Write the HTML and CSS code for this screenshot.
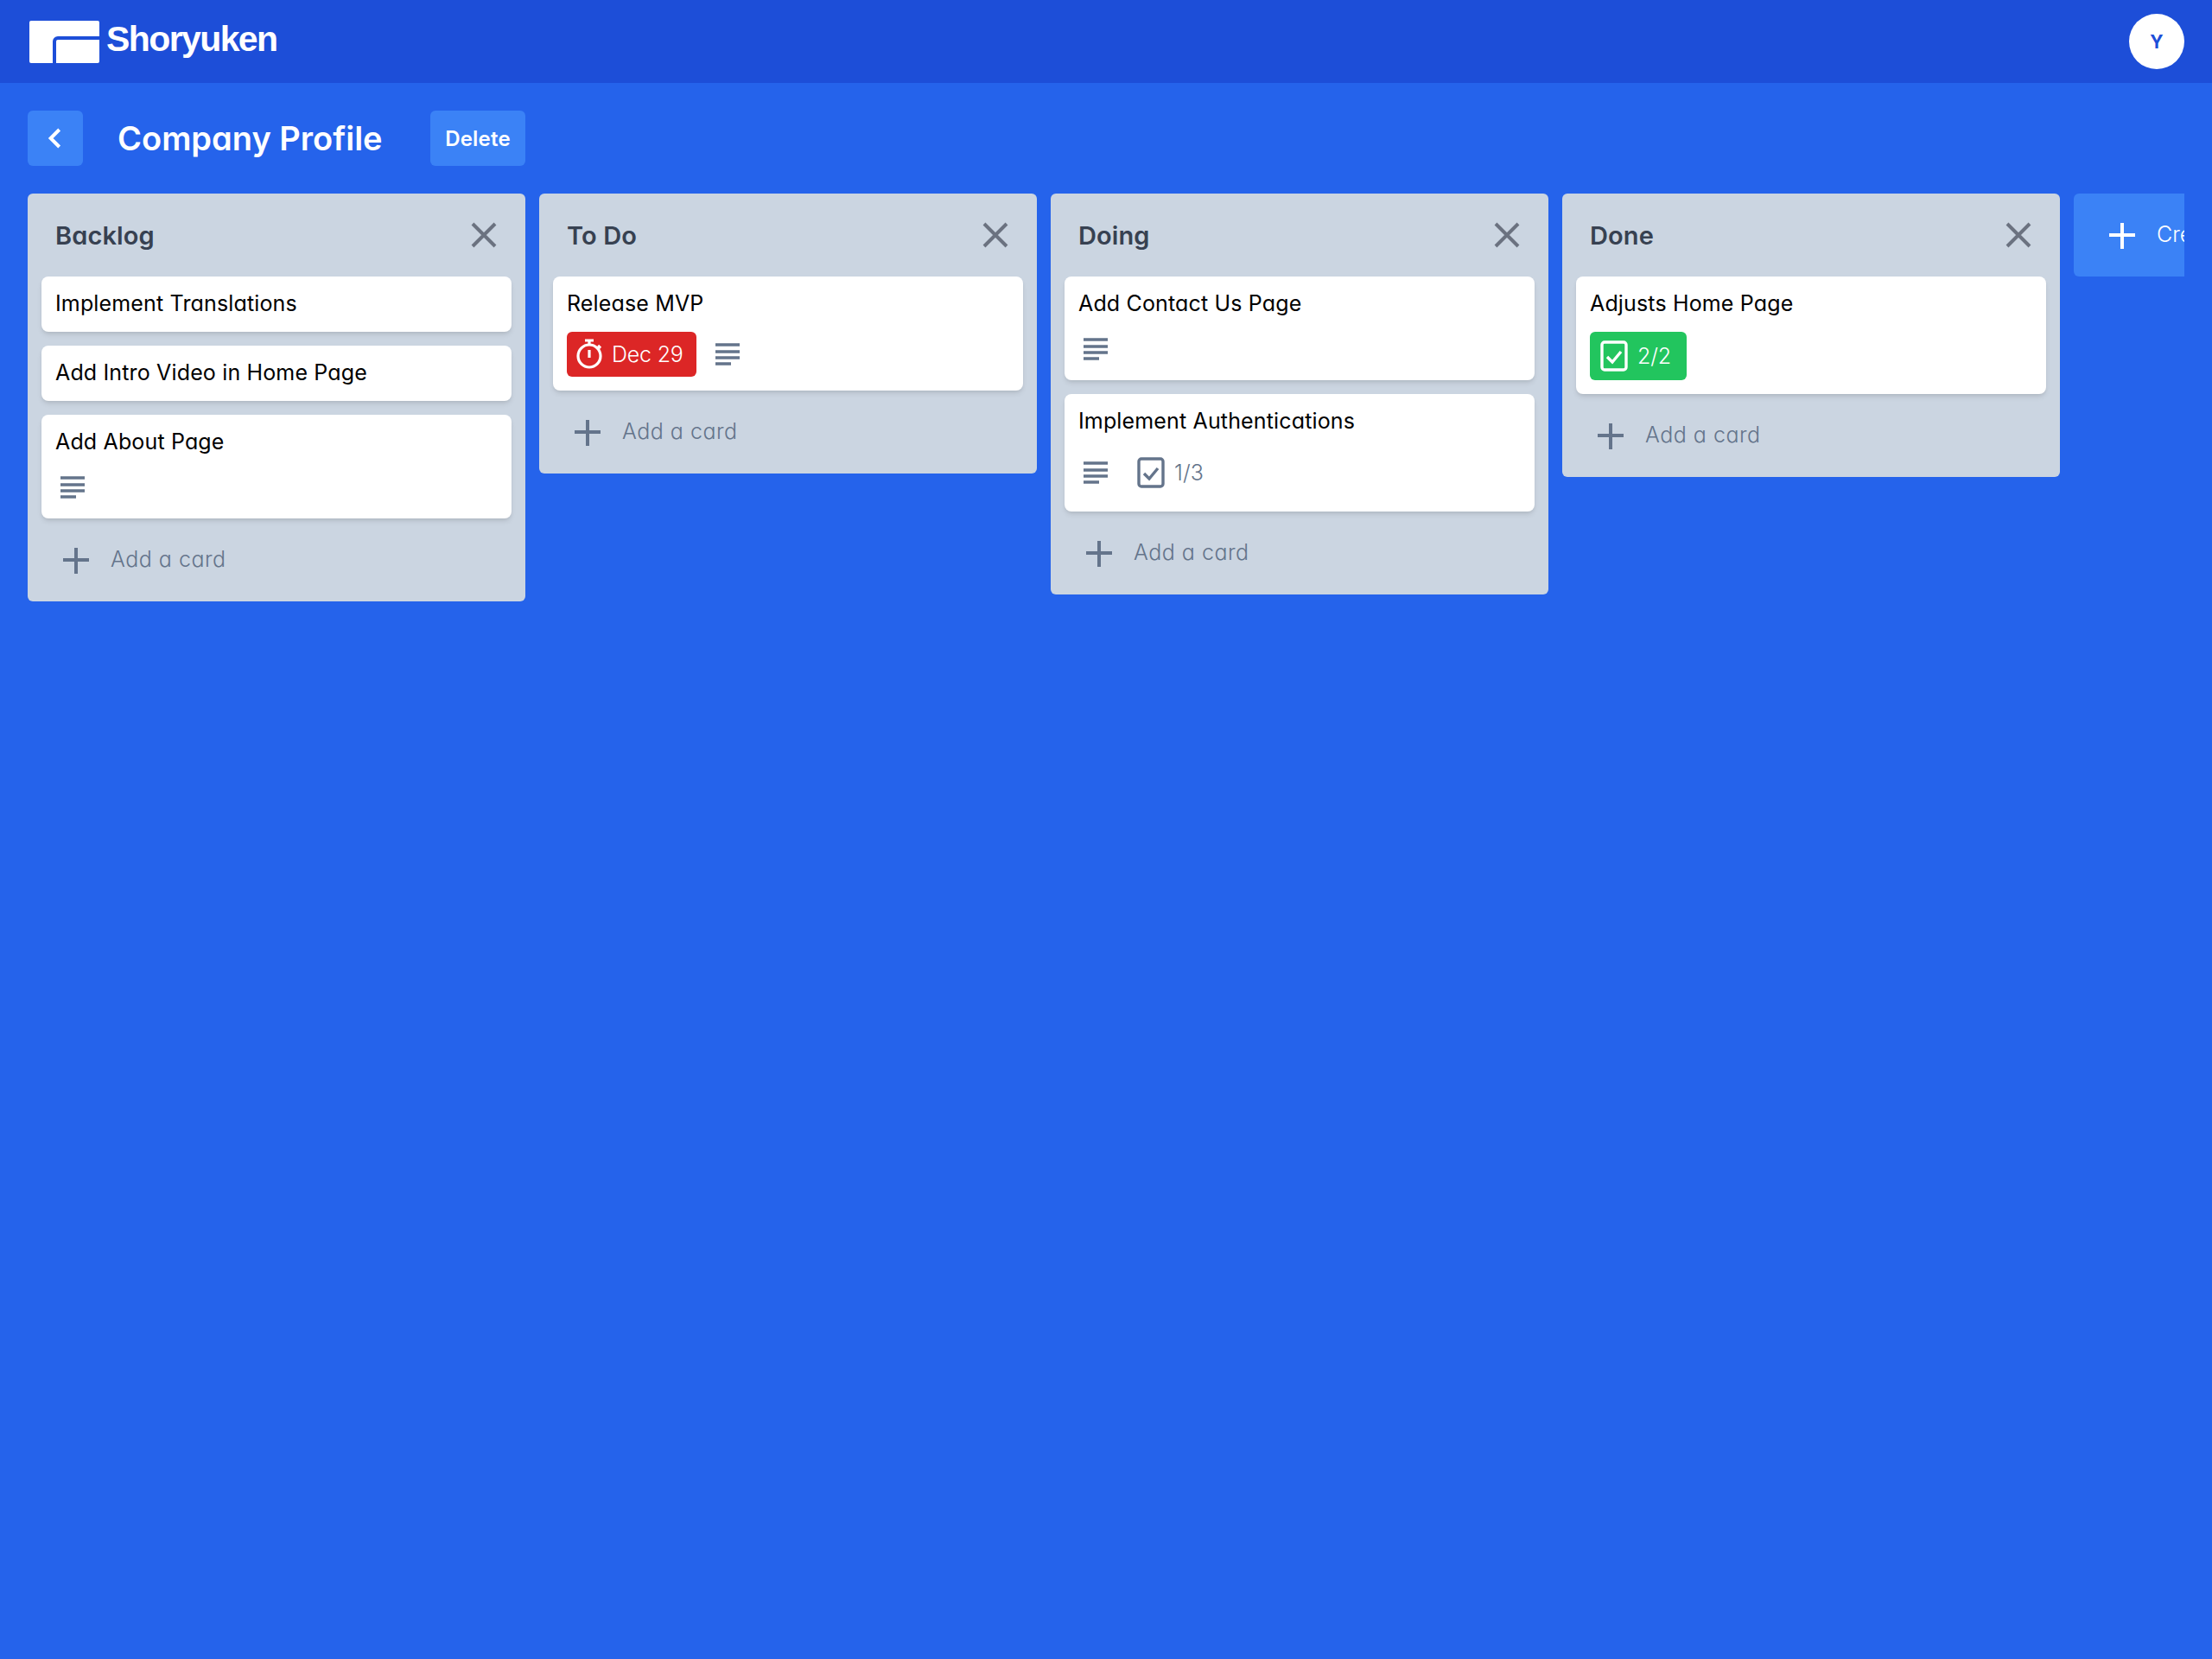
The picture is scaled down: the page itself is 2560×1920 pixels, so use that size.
FILE: index.html
```html
<!DOCTYPE html>
<html lang="en">
<head>
<meta charset="utf-8">
<title>Company Profile</title>
<link rel="stylesheet" href="styles.css">
</head>
<body>
<header class="topbar">
  <div class="brand">
    <svg class="logo" viewBox="0 0 81 49" width="81" height="49"><path fill="#fff" d="M2 0H79a2 2 0 0 1 2 2V18H33a6 6 0 0 0-6 6V49H2a2 2 0 0 1-2-2V2A2 2 0 0 1 2 0Z"/><path fill="#fff" d="M31 24a2 2 0 0 1 2-2H81V47a2 2 0 0 1-2 2H31Z"/></svg>
    <span class="brand-name">Shoryuken</span>
  </div>
  <div class="avatar">Y</div>
</header>
<main class="page">
  <div class="board-head">
    <button class="btn btn-back"><svg viewBox="0 0 24 24" width="32" height="32" fill="none" stroke="#fff" stroke-width="3"><path d="M15.5 4.5L8 12l7.5 7.5"/></svg></button>
    <h1 class="board-title">Company Profile</h1>
    <button class="btn btn-delete">Delete</button>
  </div>
  <div class="board">
    <section class="column">
      <div class="col-head"><h2>Backlog</h2><svg class="icon-x" viewBox="0 0 32 32"><path d="M3 3l26 26M29 3L3 29"/></svg></div>
      <div class="cards">
        <article class="card"><p>Implement Translations</p></article>
        <article class="card"><p>Add Intro Video in Home Page</p></article>
        <article class="card h120"><p>Add About Page</p><div class="meta"><svg class="icon-notes" viewBox="0 0 28 28"><path d="M0 3h28M0 11h28M0 18h28M0 25h18"/></svg></div></article>
      </div>
      <div class="add"><svg class="icon-plus" viewBox="0 0 32 32"><path d="M16 2v30M1 16h30"/></svg><span>Add a card</span></div>
    </section>
    <section class="column">
      <div class="col-head"><h2>To Do</h2><svg class="icon-x" viewBox="0 0 32 32"><path d="M3 3l26 26M29 3L3 29"/></svg></div>
      <div class="cards">
        <article class="card h132"><p>Release MVP</p><div class="meta meta-tight">
          <span class="badge badge-red"><svg class="icon-timer" viewBox="0 0 32 36"><path d="M11 2h10M16 7V2M16 13v9M26 8l3 3"/><circle cx="16" cy="20" r="13"/></svg>Dec 29</span>
          <svg class="icon-notes ml" viewBox="0 0 28 28"><path d="M0 3h28M0 11h28M0 18h28M0 25h18"/></svg>
        </div></article>
      </div>
      <div class="add"><svg class="icon-plus" viewBox="0 0 32 32"><path d="M16 2v30M1 16h30"/></svg><span>Add a card</span></div>
    </section>
    <section class="column">
      <div class="col-head"><h2>Doing</h2><svg class="icon-x" viewBox="0 0 32 32"><path d="M3 3l26 26M29 3L3 29"/></svg></div>
      <div class="cards">
        <article class="card h120"><p>Add Contact Us Page</p><div class="meta"><svg class="icon-notes" viewBox="0 0 28 28"><path d="M0 3h28M0 11h28M0 18h28M0 25h18"/></svg></div></article>
        <article class="card h136"><p>Implement Authentications</p><div class="meta meta-tall">
          <svg class="icon-notes" viewBox="0 0 28 28"><path d="M0 3h28M0 11h28M0 18h28M0 25h18"/></svg>
          <svg class="icon-check grey" viewBox="0 0 32 36"><rect x="2" y="2" width="28" height="32" rx="3"/><path d="M8 19l6 6 10-12"/></svg>
          <span class="count">1/3</span>
        </div></article>
      </div>
      <div class="add"><svg class="icon-plus" viewBox="0 0 32 32"><path d="M16 2v30M1 16h30"/></svg><span>Add a card</span></div>
    </section>
    <section class="column">
      <div class="col-head"><h2>Done</h2><svg class="icon-x" viewBox="0 0 32 32"><path d="M3 3l26 26M29 3L3 29"/></svg></div>
      <div class="cards">
        <article class="card h136"><p>Adjusts Home Page</p><div class="meta meta-tight">
          <span class="badge badge-green"><svg class="icon-check white" viewBox="0 0 32 36"><rect x="2" y="2" width="28" height="32" rx="3"/><path d="M8 19l6 6 10-12"/></svg>2/2</span>
        </div></article>
      </div>
      <div class="add"><svg class="icon-plus" viewBox="0 0 32 32"><path d="M16 2v30M1 16h30"/></svg><span>Add a card</span></div>
    </section>
    <button class="create"><svg class="icon-plus" viewBox="0 0 32 32"><path d="M16 2v30M1 16h30"/></svg><span>Create a list</span></button>
  </div>
</main>
</body>
</html>
```
FILE: styles.css
```css
* { box-sizing: border-box; }
html, body { margin: 0; height: 100%; }
body {
  background: #2563eb;
  font-family: Inter, "Noto Sans", sans-serif;
  font-feature-settings: "cv11";
  color: #000;
}
.topbar {
  height: 96px;
  background: #1d4ed8;
  display: flex;
  align-items: center;
  justify-content: space-between;
  padding: 0 32px 0 34px;
}
.brand { display: flex; align-items: center; gap: 8px; }
.logo { display: block; }
.brand-name {
  font-family: "Liberation Sans", Arial, sans-serif;
  font-size: 41px;
  font-weight: 700;
  letter-spacing: -1.6px;
  color: #fff;
  position: relative;
  top: -3px;
}
.avatar {
  width: 64px; height: 64px;
  border-radius: 50%;
  background: #fff;
  color: #1d4ed8;
  font-size: 21px;
  font-weight: 700;
  display: flex; align-items: center; justify-content: center;
}
.page { padding: 32px; }
.board-head { display: flex; align-items: center; height: 64px; width: 576px; }
.btn {
  height: 64px;
  border: 0;
  border-radius: 6px;
  background: #3b82f6;
  color: #fff;
  font: inherit;
  display: flex; align-items: center; justify-content: center;
  padding: 0;
}
.btn-back { width: 64px; flex: none; }
.btn-delete { width: 110px; flex: none; font-size: 24px; font-weight: 600; letter-spacing: 0.2px; }
.board-title {
  flex: 1;
  margin: 0 0 0 40px;
  font-size: 38px;
  font-weight: 600;
  color: #fff;
}
.board {
  display: flex;
  align-items: flex-start;
  gap: 16px;
  margin-top: 32px;
  overflow: hidden;
}
.column {
  flex: none;
  width: 576px;
  background: #cbd5e1;
  border-radius: 6px;
  padding: 0 16px 16px;
}
.col-head {
  height: 96px;
  display: flex; align-items: center; justify-content: space-between;
  padding: 0 16px;
}
.col-head h2 { margin: 0; font-size: 29px; font-weight: 600; color: #374151; letter-spacing: 0.1px; }
.icon-x { width: 32px; height: 32px; fill: none; stroke: #6b7280; stroke-width: 4; }
.cards { display: flex; flex-direction: column; gap: 16px; }
.card {
  min-height: 64px;
  background: #fff;
  border-radius: 8px;
  padding: 16px;
  box-shadow: 0 4px 6px -1px rgba(0,0,0,.1), 0 2px 4px -1px rgba(0,0,0,.06);
}
.h120 { height: 120px; }
.h132 { height: 132px; }
.h136 { height: 136px; }
.card p { margin: 0; font-size: 25px; line-height: 30px; letter-spacing: 0.15px; }
.meta { display: flex; align-items: center; margin-top: 22px; height: 32px; }
.meta-tall { margin-top: 29px; }
.meta-tight { margin-top: 18px; height: auto; }
.icon-notes { width: 28px; height: 28px; flex: none; margin-left: 6px; fill: none; stroke: #64748b; stroke-width: 3.4; }
.icon-notes.ml { margin-left: 22px; }
.icon-check { width: 32px; height: 36px; flex: none; fill: none; stroke-width: 3.4; }
.icon-check.grey { stroke: #64748b; margin-left: 34px; }
.icon-check.white { stroke: #fff; }
.count { margin-left: 11px; font-size: 25px; font-weight: 300; color: #64748b; letter-spacing: 0.1px; }
.badge {
  display: inline-flex; align-items: center;
  border-radius: 6px;
  color: #fff;
  font-size: 25px;
  font-weight: 300;
  letter-spacing: -0.2px;
}
.badge-red { width: 150px; height: 52px; background: #dc2626; padding-left: 10px; gap: 10px; }
.badge-green { width: 112px; height: 56px; background: #22c55e; padding-left: 12px; gap: 11px; }
.icon-timer { width: 32px; height: 36px; flex: none; fill: none; stroke: #fff; stroke-width: 3.2; }
.add {
  display: flex; align-items: center;
  margin-top: 16px;
  height: 64px;
  padding-left: 24px;
  color: #64748b;
  font-size: 25px;
  font-weight: 300;
  letter-spacing: 0.5px;
}
.add span { margin-left: 24px; position: relative; top: -1px; }
.icon-plus { width: 32px; height: 32px; flex: none; fill: none; stroke: #64748b; stroke-width: 4; }
.create {
  flex: none;
  width: 300px;
  height: 96px;
  border: 0;
  border-radius: 6px;
  background: #3b82f6;
  color: #fff;
  font: inherit;
  font-size: 25px;
  font-weight: 300;
  display: flex; align-items: center;
  padding: 0 0 0 40px;
}
.create .icon-plus { stroke: #fff; }
.create span { margin-left: 24px; position: relative; top: -1px; }
```
